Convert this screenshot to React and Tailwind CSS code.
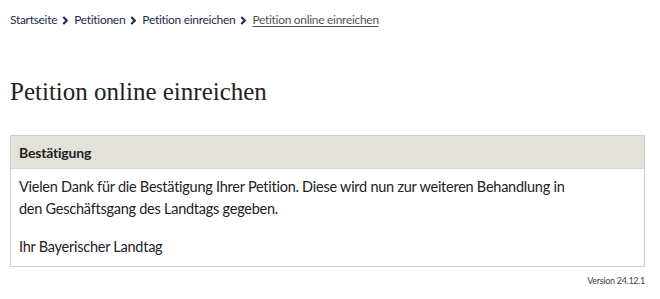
const Chevron = () => (
  <svg width="7" height="9" viewBox="0 0 7 9" className="mx-[5px] shrink-0">
    <path d="M1.3 1 L4.8 4.5 L1.3 8" fill="none" stroke="#1c2b4a" strokeWidth="2.1" />
  </svg>
);

const crumbs = ['Startseite', 'Petitionen', 'Petition einreichen'];

export default function App() {
  return (
    <div className="w-[660px] h-[299px] bg-white px-[10px] font-['Lato',sans-serif] text-[#222]">
      {/* Breadcrumb */}
      <nav className="flex items-center pt-[10px] h-[30px] text-[12px] tracking-[-0.3px] text-[#1c2b4a]">
        {crumbs.map((c) => (
          <span key={c} className="flex items-center">
            <span>{c}</span>
            <Chevron />
          </span>
        ))}
        <span className="text-[#555] underline underline-offset-2">Petition online einreichen</span>
      </nav>

      <h1 className="mt-[47px] text-[25px] leading-[30px] font-['Liberation_Serif',serif] text-[#222]">
        Petition online einreichen
      </h1>

      <div className="mt-[28px] w-[635px] border border-[#cfcfcf]">
        <div className="h-[33px] flex items-center px-[8px] bg-[#e2e1da] border-b border-[#d6d5ce] text-[14px] font-bold tracking-[-0.2px]">
          Bestätigung
        </div>
        <div className="px-[8px] pt-[7px] pb-[8px] text-[14.5px] tracking-[-0.25px] leading-[22px]">
          <p>
            Vielen Dank für die Bestätigung Ihrer Petition. Diese wird nun zur weiteren Behandlung in
            <br />
            den Geschäftsgang des Landtags gegeben.
          </p>
          <p className="mt-[16px]">Ihr Bayerischer Landtag</p>
        </div>
      </div>

      <div className="w-[635px] text-right text-[9px] tracking-[-0.3px] text-[#444] mt-[7px]">Version 24.12.1</div>
    </div>
  );
}
